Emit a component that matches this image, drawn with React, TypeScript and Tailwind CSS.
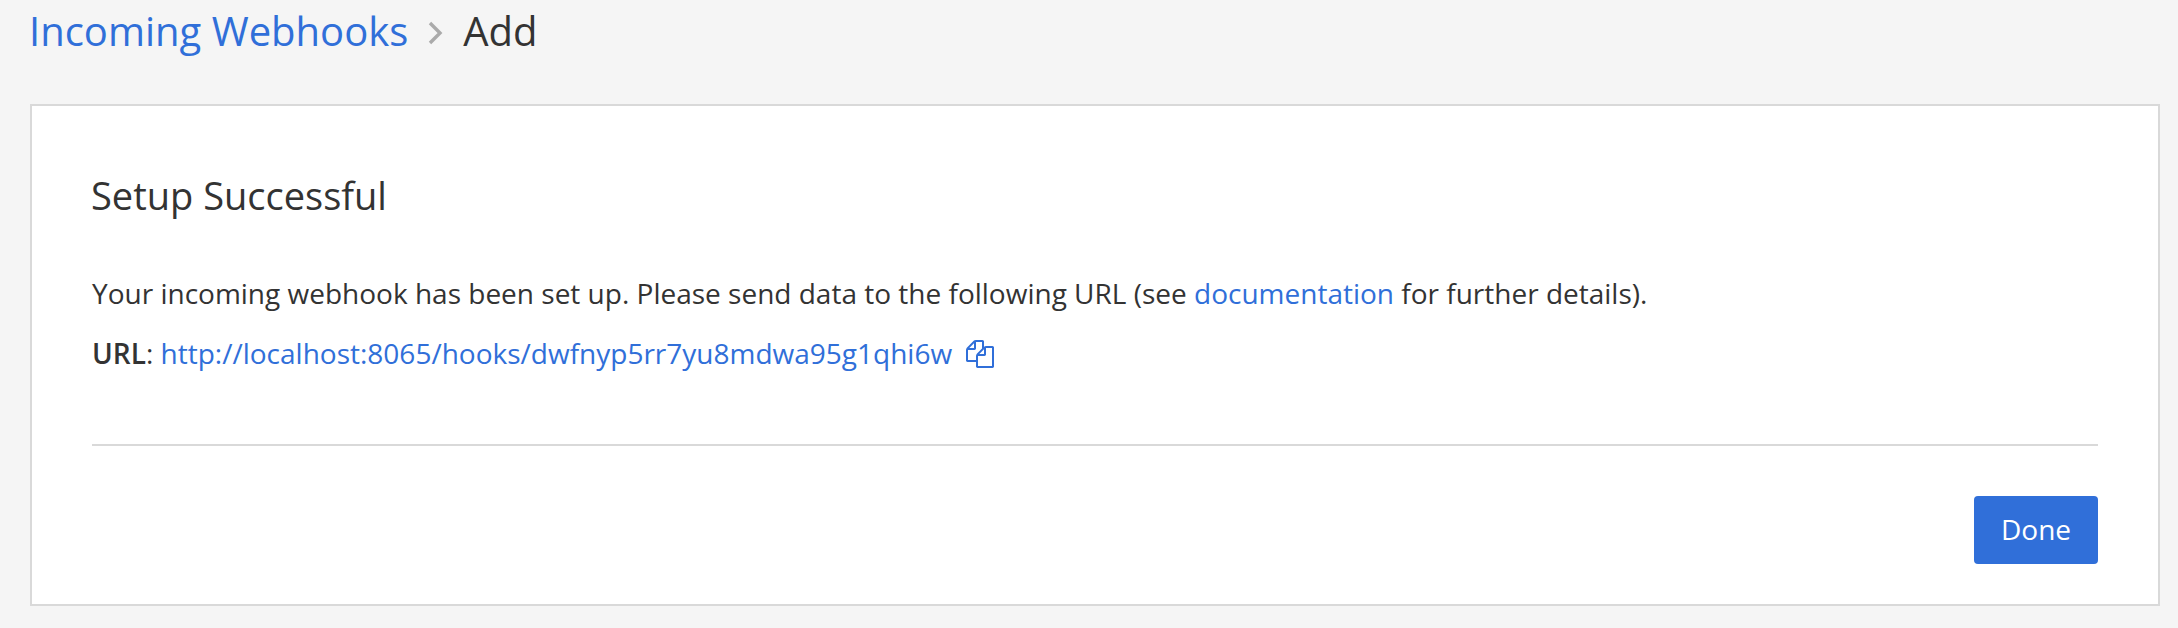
export default function App() {
  return (
    <main className="h-[628px] overflow-hidden bg-[#f5f5f5] px-[30px] font-['Open_Sans',sans-serif] text-[#333] antialiased">
      <nav className="flex h-[104px] items-start text-[40px] leading-[62px]">
        <a className="-ml-px text-[#306fd9]">Incoming Webhooks</a>
        <svg className="mt-[21px] mr-[20px] ml-[20px] h-[24px] w-[15px]" viewBox="0 0 15 24" fill="none" stroke="#aaa" strokeWidth="3.4"><path d="M2 2 12 12 2 22" /></svg>
        <span>Add</span>
      </nav>
      <section className="h-[502px] w-[2130px] border-2 border-[#d9d9d9] bg-white px-[60px] pt-[62px]">
        <h1 className="-ml-px h-[95px] text-[38px] leading-[54px]">Setup Successful</h1>
        <p className="h-[60px] text-[28px] leading-[60px]">Your incoming webhook has been set up. Please send data to the following URL (see <a className="text-[#306fd9]">documentation</a> for further details).</p>
        <p className="flex h-[121px] items-start text-[28px] leading-[60px]">
          <span className="whitespace-pre"><b className="font-semibold">URL</b>: <a className="text-[#306fd9]">http://localhost:8065/hooks/dwfnyp5rr7yu8mdwa95g1qhi6w</a></span>
          <svg className="mt-[17px] ml-[14px] size-[28px] fill-[#306fd9]" viewBox="0 0 1792 1792"><path d="M1696 384q40 0 68 28t28 68v1216q0 40-28 68t-68 28h-960q-40 0-68-28t-28-68v-288h-544q-40 0-68-28t-28-68v-672q0-40 20-88t48-76l408-408q28-28 76-48t88-20h416q40 0 68 28t28 68v328q68-40 128-40h416zm-544 213l-299 299h299v-299zm-640-384l-299 299h299v-299zm196 647l316-316v-416h-384v416q0 40-28 68t-68 28h-416v640h512v-256q0-40 20-88t48-76zm956 804v-1152h-384v416q0 40-28 68t-68 28h-416v640h896z" /></svg>
        </p>
        <footer className="flex justify-end border-t-2 border-[#d9d9d9] pt-[50px]">
          <button className="h-[68px] w-[124px] rounded-[4px] bg-[#306fd9] pb-[2px] text-[28px] text-white">Done</button>
        </footer>
      </section>
    </main>
  );
}
